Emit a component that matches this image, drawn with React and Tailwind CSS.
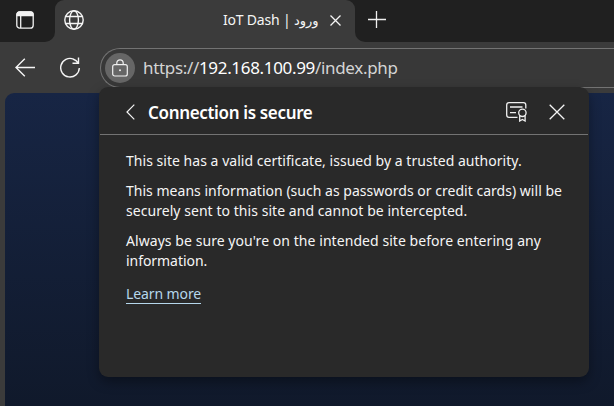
import React from "react";

function TabActionsIcon() {
  return (
    <svg width="18" height="18" viewBox="0 0 18 18" fill="none" stroke="#f2f2f2" strokeWidth="1.3">
      <rect x="0.8" y="0.8" width="16.4" height="16.4" rx="3" />
      <path d="M1 3.5Q1 1 3.5 1H14.5Q17 1 17 3.5V4.6H1Z" fill="#f2f2f2" />
      <path d="M4.7 5V17" />
    </svg>
  );
}

function GlobeIcon() {
  return (
    <svg width="20" height="20" viewBox="0 0 20 20" fill="none" stroke="#f5f5f5" strokeWidth="1.4">
      <circle cx="10" cy="10" r="9.2" />
      <ellipse cx="10" cy="10" rx="4.4" ry="9.2" />
      <path d="M1.7 6.5H18.3M1.7 13.5H18.3" />
    </svg>
  );
}

function TabBar() {
  return (
    <div className="flex h-[42px] bg-[#3b3b3b]">
      <div className="w-[55px] shrink-0 rounded-br-[10px] bg-[#202020] pl-[16px] pt-[11px]">
        <TabActionsIcon />
      </div>
      <div className="w-[300px] shrink-0 bg-gradient-to-b from-[#202020] from-50% to-[#3b3b3b] to-50%">
        <div className="flex h-[42px] items-center rounded-t-[9px] bg-[#3b3b3b] pb-[2px] pl-[9px]">
          <GlobeIcon />
          <div dir="ltr" className="ml-[138px] w-[98px] whitespace-nowrap pl-[1px] text-[14px] leading-[20px] tracking-[-0.2px] text-[#f5f5f5]">
            IoT Dash | <span className="font-['DejaVu_Sans'] text-[13px]">ورود</span>
          </div>
          <svg className="ml-[10px]" width="11" height="11" viewBox="0 0 11 11" stroke="#f5f5f5" strokeWidth="1.3">
            <path d="M0.5 0.5L10.5 10.5M10.5 0.5L0.5 10.5" />
          </svg>
        </div>
      </div>
      <div className="flex-1 rounded-bl-[10px] bg-[#202020] pl-[13px] pt-[11px]">
        <svg width="18" height="18" viewBox="0 0 18 18" stroke="#f0f0f0" strokeWidth="1.3">
          <path d="M0 8.5H18M8.5 0V17" />
        </svg>
      </div>
    </div>
  );
}

function Toolbar() {
  return (
    <div className="flex h-[51px] bg-[#3b3b3b] pl-[15px]">
      <svg className="mt-[16px] shrink-0" width="20" height="19" viewBox="0 0 20 19" fill="none" stroke="#f5f5f5" strokeWidth="1.4">
        <path d="M20 9.5H1M9.8 0.8L1 9.5L9.8 18.2" />
      </svg>
      <svg className="ml-[25px] mt-[15px] shrink-0" width="21" height="22" viewBox="0 0 21 22" fill="none" stroke="#f5f5f5" strokeWidth="1.4">
        <path d="M13.5 2.1A9.3 9.3 0 1 0 19.3 11M18.5 0.5V6.3H12.5M18.5 6.3Q16.3 3.2 13 2" />
      </svg>
      <div className="ml-[19px] mt-[6px] flex h-[40px] flex-1 rounded-l-full border border-r-0 border-[#737373] bg-[#383838] pl-[4px] pt-[4px]">
        <div className="flex h-[30px] w-[30px] shrink-0 items-center justify-center rounded-full bg-[#666666]">
          <svg className="-mt-[1px]" width="16" height="18" viewBox="0 0 16 18" fill="none" stroke="#f0f0f0" strokeWidth="1.2">
            <rect x="0.7" y="5.7" width="14.6" height="11.3" rx="2" />
            <path d="M4.8 5.5V4A3.2 3.2 0 0 1 11.2 4V5.5" />
            <circle cx="8" cy="11.3" r="1" fill="#f0f0f0" stroke="none" />
          </svg>
        </div>
        <div className="ml-[8px] whitespace-nowrap text-[17px] leading-[29px] tracking-[-0.33px] text-[#d4d4d4]">
          https://<span className="text-white">192.168.100.99</span>/index.php
        </div>
      </div>
    </div>
  );
}

function CertificateIcon() {
  return (
    <svg width="21" height="20" viewBox="0 0 21 20" fill="none" stroke="#f0f0f0" strokeWidth="1.3">
      <path d="M11.5 15.3H3Q0.7 15.3 0.7 13V3Q0.7 0.7 3 0.7H17.5Q19.8 0.7 19.8 3V6.5M4 5H16.5M4 10.7H10" />
      <circle cx="16.4" cy="10.8" r="3.7" />
      <path d="M13.7 13.5V19L16.4 17.5L19.1 19V13.5" />
    </svg>
  );
}

function ConnectionPopup() {
  return (
    <div className="absolute left-[99px] top-[87px] h-[290px] w-[490px] rounded-[9px] bg-[#292929] shadow-[0_5px_12px_rgba(0,0,0,0.35)]">
      <div className="mx-[1px] flex h-[48px] border-b border-[#737373]">
        <svg className="ml-[26px] mt-[17px]" width="9" height="16" viewBox="0 0 9 16" fill="none" stroke="#f5f5f5" strokeWidth="1.2">
          <path d="M8.3 0.7L1 8L8.3 15.3" />
        </svg>
        <h1 className="ml-[13px] mt-[13px] w-[358px] whitespace-nowrap text-[17px] font-semibold leading-[25px] tracking-[-0.34px] text-white">
          Connection is secure
        </h1>
        <div className="mt-[15px]"><CertificateIcon /></div>
        <svg className="ml-[22px] mt-[17px]" width="16" height="16" viewBox="0 0 16 16" stroke="#f5f5f5" strokeWidth="1.3">
          <path d="M0.7 0.7L15.3 15.3M15.3 0.7L0.7 15.3" />
        </svg>
      </div>
      <div className="whitespace-nowrap pl-[27px] pt-[16px] text-[14px] leading-[20px] text-[#f5f5f5]">
        <p className="tracking-[0.03px]">This site has a valid certificate, issued by a trusted authority.</p>
        <p className="mt-[10px] tracking-[0.02px]">
          This means information (such as passwords or credit cards) will be
          <br />
          <span className="tracking-[0.05px]">securely sent to this site and cannot be intercepted.</span>
        </p>
        <p className="mt-[10px] tracking-[0.06px]">
          Always be sure you're on the intended site before entering any
          <br />
          <span className="tracking-[-0.05px]">information.</span>
        </p>
        <a className="mt-[14px] inline-block h-[19px] border-b border-[#b5d7ec] leading-[18px] tracking-[-0.1px] text-[#b5d7ec]">Learn more</a>
      </div>
    </div>
  );
}

export default function App() {
  return (
    <div className="relative h-[406px] w-[614px] overflow-hidden bg-[#3b3b3b] font-['Noto_Sans',sans-serif]">
      <TabBar />
      <Toolbar />
      <div className="ml-[5px] h-[313px] rounded-tl-[9px] bg-gradient-to-b from-[#172544] to-[#10192b]" />
      <ConnectionPopup />
    </div>
  );
}
